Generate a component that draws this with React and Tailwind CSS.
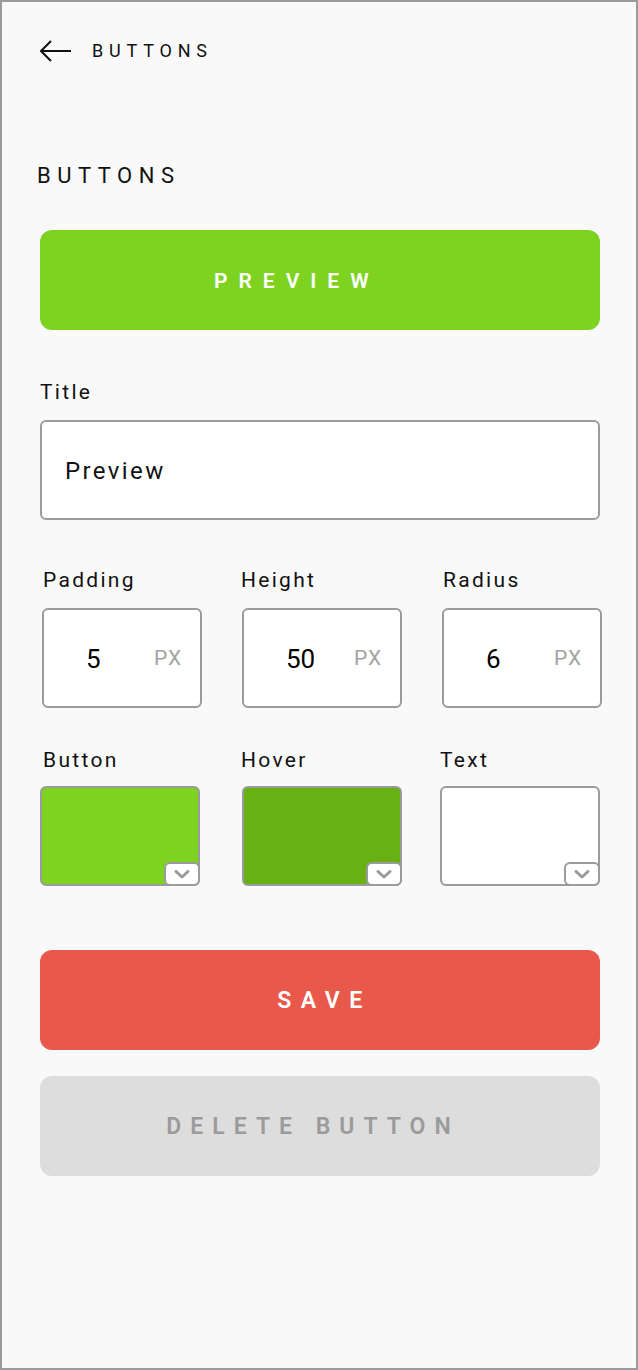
import { useState } from 'react';

const FONT = { fontFamily: 'Roboto, "Liberation Sans", sans-serif' };

function BackArrow() {
  return (
    <svg width="32" height="22" viewBox="0 0 32 22" fill="none" className="shrink-0">
      <path d="M1 11H31" stroke="#111" strokeWidth="2" />
      <path d="M11 1L1 11L11 21" stroke="#111" strokeWidth="2" />
    </svg>
  );
}

function NumberBox({ value }) {
  return (
    <div className="w-[160px] h-[100px] bg-white border-2 border-[#9b9b9b] rounded-[6px] flex items-center pl-[42px] pt-[2px]">
      <span className="w-[68px] text-[26px] text-black">{value}</span>
      <span className="text-[21px] text-[#a3a3a3] tracking-[1px]">PX</span>
    </div>
  );
}

function Swatch({ color, offset }) {
  return (
    <div
      className={`relative shrink-0 w-[160px] h-[100px] border-2 border-[#9b9b9b] rounded-[6px] ${color} ${offset}`}
    >
      {/* little dropdown tab */}
      <div className="absolute right-[-2px] bottom-[-2px] w-[36px] h-[24px] bg-white border-2 border-[#9b9b9b] rounded-[6px] flex items-center justify-center">
        <svg width="16" height="9" viewBox="0 0 16 9" fill="none">
          <path d="M2 1.5L8 7L14 1.5" stroke="#9b9b9b" strokeWidth="3" strokeLinecap="round" strokeLinejoin="round" />
        </svg>
      </div>
    </div>
  );
}

export default function App() {
  const [title] = useState('Preview');

  return (
    <div
      className="w-[638px] h-[1370px] bg-[#f9f9f9] border-2 border-[#9b9b9b] flex flex-col pl-[38px] pr-[36px] pt-[38px]"
      style={FONT}
    >
      {/* Top bar */}
      <div className="h-[22px] flex items-center gap-[20px]">
        <BackArrow />
        <span className="text-[18px] tracking-[5.8px] text-[#111] leading-none">BUTTONS</span>
      </div>

      {/* Section heading */}
      <h2 className="mt-[102px] -ml-[3px] h-[24px] leading-[24px] text-[22px] tracking-[6.5px] text-[#111]">
        BUTTONS
      </h2>

      {/* Preview */}
      <button className="mt-[42px] h-[100px] w-[560px] rounded-[12px] bg-[#7ed321] text-white text-[21px] font-semibold tracking-[11px] flex items-center pl-[174px] pt-[3px]">
        PREVIEW
      </button>

      {/* Title */}
      <label className="mt-[50px] h-[24px] leading-[24px] text-[21px] text-[#111] tracking-[2.3px]">Title</label>
      <div className="mt-[16px] h-[100px] w-[560px] bg-white border-2 border-[#9b9b9b] rounded-[6px] flex items-center px-[23px] pt-[2px]">
        <span className="text-[24px] text-[#111] tracking-[2.4px]">{title}</span>
      </div>

      {/* Sizes */}
      <div className="mt-[48px] ml-[2px] grid grid-cols-[160px_160px_160px] gap-x-[40px]">
        <span className="h-[24px] leading-[24px] text-[21px] text-[#111] tracking-[2.3px] pl-[1px]">Padding</span>
        <span className="h-[24px] leading-[24px] text-[21px] text-[#111] tracking-[2.3px] -ml-[1px]">Height</span>
        <span className="h-[24px] leading-[24px] text-[21px] text-[#111] tracking-[2.3px] pl-[1px]">Radius</span>
      </div>
      <div className="mt-[16px] ml-[2px] grid grid-cols-[160px_160px_160px] gap-x-[40px]">
        <NumberBox value="5" />
        <NumberBox value="50" />
        <NumberBox value="6" />
      </div>

      {/* Colours */}
      <div className="mt-[40px] grid grid-cols-[160px_160px_160px] gap-x-[40px]">
        <span className="h-[24px] leading-[24px] text-[21px] text-[#111] tracking-[2.3px] pl-[3px]">Button</span>
        <span className="h-[24px] leading-[24px] text-[21px] text-[#111] tracking-[2.3px] pl-[1px]">Hover</span>
        <span className="h-[24px] leading-[24px] text-[21px] text-[#111] tracking-[2.3px]">Text</span>
      </div>
      <div className="mt-[14px] flex">
        <Swatch color="bg-[#7ed321]" offset="" />
        <Swatch color="bg-[#67b115]" offset="ml-[42px]" />
        <Swatch color="bg-white" offset="ml-[38px]" />
      </div>

      {/* Actions */}
      <button className="mt-[64px] h-[100px] w-[560px] rounded-[12px] bg-[#e8594b] text-white text-[23px] font-semibold tracking-[9.5px] pl-[9px] pt-[3px]">
        SAVE
      </button>
      <button className="mt-[26px] h-[100px] w-[560px] rounded-[12px] bg-[#dddddd] text-[#9b9b9b] text-[23px] font-semibold tracking-[9px] pt-[3px] pr-[14px]">
        DELETE BUTTON
      </button>
    </div>
  );
}
